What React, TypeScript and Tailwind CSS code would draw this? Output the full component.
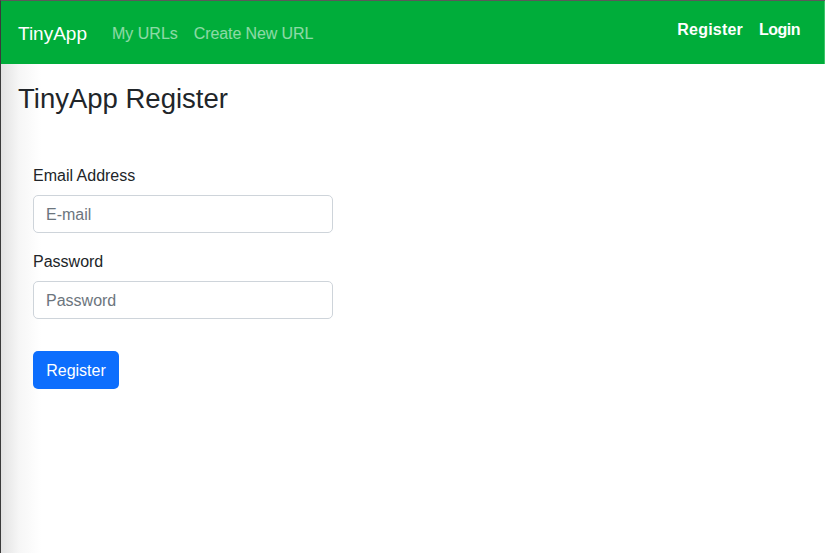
import React from "react";

export default function App() {
  return (
    <div
      className="w-[825px] h-[553px] overflow-hidden flex flex-col border-l border-l-[#3a3a3a] border-t border-t-[#5a5a5a] bg-white"
      style={{ fontFamily: '"Liberation Sans", Arial, sans-serif' }}
    >
      <nav className="h-[63px] shrink-0 bg-[#00ad3a] flex items-center justify-between pl-[17px] pr-[24px] border-r border-r-[#3cc468]">
        <div className="flex items-center">
          <span className="text-white text-[19px] mr-[25px] mt-[3px]">TinyApp</span>
          <div className="flex items-center gap-[16px] text-[16px] text-white/55 mt-[3px]">
            <span>My URLs</span>
            <span className="tracking-[-0.1px]">Create New URL</span>
          </div>
        </div>
        <div className="flex items-center gap-[16px] text-[16px] font-bold text-white mb-[5px]">
          <span className="tracking-[0.2px]">Register</span>
          <span className="tracking-[-0.5px]">Login</span>
        </div>
      </nav>
      <main className="flex-1 bg-[linear-gradient(to_right,#e2e2e2,#f6f6f6_18px,#ffffff_40px)] pl-[17px] pt-[18px]">
        <h3 className="text-[27.5px] leading-[34px] text-[#212529]">TinyApp Register</h3>
        <form className="pl-[15px] pt-[47px] w-[316px]">
          <label className="block text-[16px] leading-[24px] pt-[1px] text-[#212529] mb-[7px]">Email Address</label>
          <input
            type="email"
            placeholder="E-mail"
            className="block w-[300px] h-[38px] rounded-[5px] border border-[#ced4da] px-[12px] pt-[1px] text-[16px] placeholder:text-[#6c757d] mb-[16px] bg-white"
          />
          <label className="block text-[16px] leading-[24px] pt-[1px] text-[#212529] mb-[7px]">Password</label>
          <input
            type="password"
            placeholder="Password"
            className="block w-[300px] h-[38px] rounded-[5px] border border-[#ced4da] px-[12px] pt-[1px] text-[16px] placeholder:text-[#6c757d] mb-[32px] bg-white"
          />
          <button
            type="button"
            className="h-[38px] w-[86px] rounded-[5px] bg-[#0d6efd] text-white text-[16px] pt-[1px]"
          >
            Register
          </button>
        </form>
      </main>
    </div>
  );
}
